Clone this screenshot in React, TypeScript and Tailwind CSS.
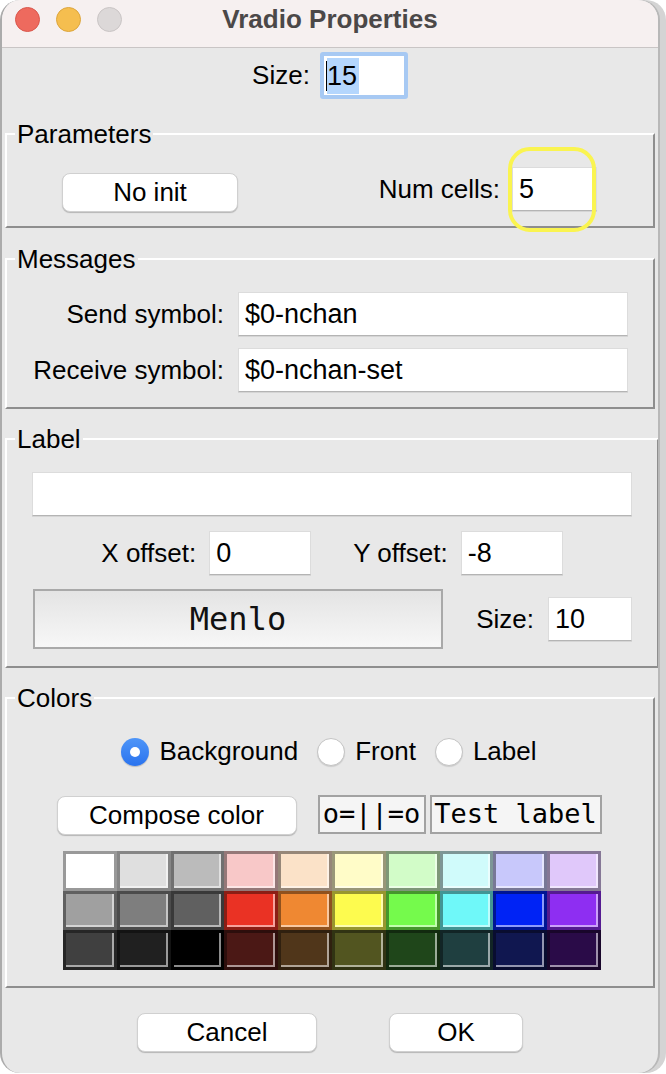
import React from "react";

const font = "font-['Liberation_Sans',Arial,sans-serif]";
const mono = "font-['DejaVu_Sans_Mono','Liberation_Mono',monospace]";

const swatches: string[] = [
  "bg-[#ffffff]", "bg-[#dfdfdf]", "bg-[#bbbbbb]", "bg-[#f8c8c8]", "bg-[#fbe2c8]",
  "bg-[#fffcc8]", "bg-[#d2fcc8]", "bg-[#d0fbfb]", "bg-[#c8c8fb]", "bg-[#e0c8fa]",
  "bg-[#a0a0a0]", "bg-[#7e7e7e]", "bg-[#606060]", "bg-[#ea3224]", "bg-[#ef8832]",
  "bg-[#fdfb4f]", "bg-[#75fa4c]", "bg-[#6ff8f9]", "bg-[#0023f5]", "bg-[#8e2ef2]",
  "bg-[#404040]", "bg-[#202020]", "bg-[#000000]", "bg-[#4b1815]", "bg-[#50361a]",
  "bg-[#525520]", "bg-[#1f461a]", "bg-[#1f3f40]", "bg-[#101750]", "bg-[#2a0b48]",
];

function Entry({ value, className }: { value: string; className: string }) {
  return (
    <div
      className={`h-[44px] bg-white border border-[#dcdcdc] border-b-[#b4b4b4] shadow-[0_1px_0_rgba(0,0,0,0.08)] flex items-center pl-[6px] text-[27px] text-black ${className}`}
    >
      {value}
    </div>
  );
}

function MacButton({ label, className }: { label: string; className: string }) {
  return (
    <div
      className={`h-[39px] bg-white rounded-[8px] border border-[#d0d0d0] shadow-[0_1px_1px_rgba(0,0,0,0.22)] flex items-center justify-center text-[26px] text-black ${className}`}
    >
      {label}
    </div>
  );
}

function Group({ title, children, className }: { title: string; children: React.ReactNode; className: string }) {
  return (
    <fieldset
      className={`mx-[3px] border-t-2 border-l-2 border-t-white border-l-white border-b-2 border-r-2 border-b-[#8e8e8e] border-r-[#8e8e8e] ${className}`}
    >
      <legend className="ml-[8px] px-[2px] h-[30px] leading-[30px] text-[26px] text-black">{title}</legend>
      {children}
    </fieldset>
  );
}

function Radio({ checked, label }: { checked: boolean; label: string }) {
  return (
    <div className="flex items-center">
      {checked ? (
        <div className="w-[28px] h-[28px] rounded-full bg-gradient-to-b from-[#4e95f8] to-[#2a73ee] flex items-center justify-center shadow-[0_1px_1px_rgba(0,0,0,0.2)]">
          <div className="w-[10px] h-[10px] rounded-full bg-white" />
        </div>
      ) : (
        <div className="w-[28px] h-[28px] rounded-full bg-white border border-[#c4c4c4] shadow-[0_1px_1px_rgba(0,0,0,0.12)]" />
      )}
      <span className="ml-[10px] text-[26px] text-black">{label}</span>
    </div>
  );
}

export default function App() {
  return (
    <div className={`w-[666px] h-[1074px] bg-white ${font}`}>
      <div className="w-[658px] h-[1073px] bg-[#e8e8e8] rounded-[20px] border-l-2 border-[#ababab] overflow-hidden flex flex-col shadow-[2px_0_0_#b8b8b8,8px_0_0_#d4d4d4]">
        {/* Title bar */}
        <div className="relative h-[48px] shrink-0 bg-[#f6f0f0] border-b border-[#c9c5c5] flex items-center justify-center">
          <div className="absolute left-[13px] top-[7px] flex gap-[16px]">
            <div className="w-[25px] h-[25px] rounded-full bg-[#ee6a5e] border border-[#d9574c]" />
            <div className="w-[25px] h-[25px] rounded-full bg-[#f5be4f] border border-[#dca53c]" />
            <div className="w-[25px] h-[25px] rounded-full bg-[#dcd8d8] border border-[#c9c4c4]" />
          </div>
          <span className="text-[26px] font-bold text-[#4b4848] -mt-[8px]">Vradio Properties</span>
        </div>

        {/* Size row */}
        <div className="flex items-center justify-center mt-[4px] h-[47px]">
          <span className="text-[26px] text-black">Size:</span>
          <div className="ml-[10px] w-[88px] h-[47px] rounded-[3px] border-[4px] border-[#a7c9f3] bg-white flex items-center pl-[2px]">
            <div className="w-[1px] h-[30px] bg-black" />
            <span className="bg-[#b4d6fd] text-[27px] leading-[36px] text-black pr-[2px]">15</span>
          </div>
        </div>

        {/* Parameters */}
        <Group title="Parameters" className="mt-[20px]">
          <div className="relative flex items-start pt-[18px] pb-[14px]">
            <MacButton label="No init" className="ml-[55px] mt-[6px] w-[176px]" />
            <div className="flex-1" />
            <span className="h-[44px] flex items-center text-[26px] text-black">Num cells:</span>
            <Entry value="5" className="ml-[12px] mr-[56px] w-[85px]" />
            <div className="absolute left-[501px] top-[-2px] w-[88px] h-[85px] rounded-[22px] border-[4px] border-[#faf450]" />
          </div>
        </Group>

        {/* Messages */}
        <Group title="Messages" className="mt-[16px]">
          <div className="flex flex-col gap-[12px] pt-[18px] pb-[15px] pr-[25px]">
            <div className="flex items-center justify-end">
              <span className="text-[26px] text-black">Send symbol:</span>
              <Entry value="$0-nchan" className="ml-[14px] w-[390px]" />
            </div>
            <div className="flex items-center justify-end">
              <span className="text-[26px] text-black">Receive symbol:</span>
              <Entry value="$0-nchan-set" className="ml-[14px] w-[390px]" />
            </div>
          </div>
        </Group>

        {/* Label */}
        <Group title="Label" className="mt-[15px]">
          <div className="flex flex-col pt-[18px] pb-[17px] px-[25px]">
            <Entry value="" className="w-[600px]" />
            <div className="flex items-center justify-center mt-[15px]">
              <span className="text-[26px] text-black">X offset:</span>
              <Entry value="0" className="ml-[13px] w-[102px]" />
              <span className="ml-[42px] text-[26px] text-black">Y offset:</span>
              <Entry value="-8" className="ml-[13px] w-[102px]" />
            </div>
            <div className="flex items-center mt-[14px]">
              <div className="ml-[1px] w-[410px] h-[60px] border-2 border-[#a9a9a9] bg-gradient-to-b from-[#e4e4e4] to-[#f7f7f7] flex items-center justify-center">
                <span className={`${mono} text-[32px] text-[#111]`}>Menlo</span>
              </div>
              <div className="flex-1" />
              <span className="text-[26px] text-black">Size:</span>
              <Entry value="10" className="ml-[14px] w-[84px]" />
            </div>
          </div>
        </Group>

        {/* Colors */}
        <Group title="Colors" className="mt-[15px]">
          <div className="flex flex-col items-center pt-[19px] pb-[16px]">
            <div className="flex items-center gap-[19px] ml-[-2px]">
              <Radio checked label="Background" />
              <Radio checked={false} label="Front" />
              <Radio checked={false} label="Label" />
            </div>
            <div className="flex items-start mt-[24px] -ml-[2px]">
              <MacButton label="Compose color" className="mt-[1px] w-[240px]" />
              <div className={`ml-[21px] w-[108px] h-[39px] border-2 border-[#a2a2a2] bg-[#f5f5f5] flex items-center justify-center ${mono} text-[27px] text-black`}>
                o=||=o
              </div>
              <div className={`ml-[4px] w-[172px] h-[39px] border-2 border-[#a2a2a2] bg-[#f5f5f5] flex items-center justify-center ${mono} text-[27px] text-black`}>
                Test label
              </div>
            </div>
            <div className="grid grid-cols-10 w-[538px] mt-[16px] ml-[4px]">
              {swatches.map((c, i) => (
                <div
                  key={i}
                  className={`h-[39.5px] border-[3px] border-black/40 shadow-[inset_-2px_-2px_0_rgba(255,255,255,0.55)] ${c}`}
                />
              ))}
            </div>
          </div>
        </Group>

        {/* Bottom buttons */}
        <div className="flex justify-center gap-[72px] mt-[25px]">
          <MacButton label="Cancel" className="w-[180px]" />
          <MacButton label="OK" className="w-[134px]" />
        </div>
      </div>
    </div>
  );
}
